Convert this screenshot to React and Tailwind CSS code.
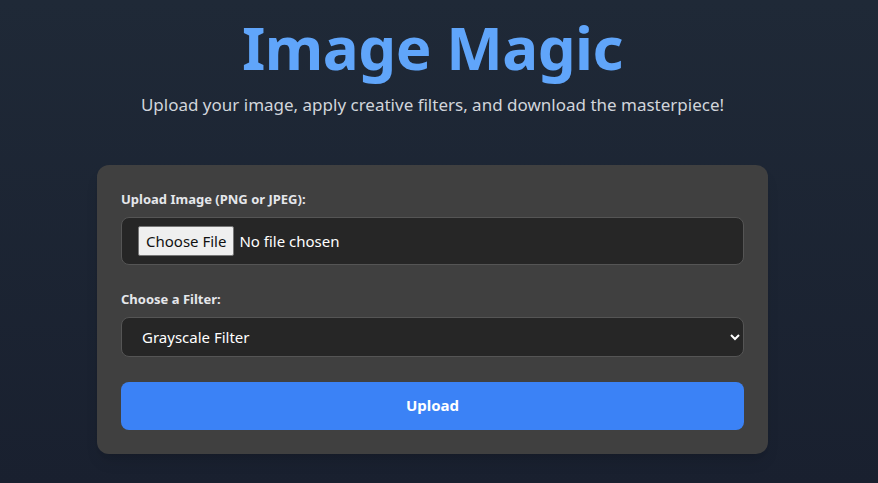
export default function App() {
  return (
    <div
      className="min-h-screen bg-gradient-to-b from-[#1f2937] to-[#19202f] pr-[13px] text-gray-200"
      style={{ fontFamily: '"Noto Sans", "Open Sans", sans-serif' }}
    >
      <div className="mx-auto flex max-w-[671px] flex-col items-center pt-[11px]">
        <h1 className="text-[60px] font-bold leading-[1.2] tracking-[-0.5px] text-[#60a5fa]">
          Image Magic
        </h1>
        <p className="mt-[9px] text-[17px] text-[#d1d5db]">
          Upload your image, apply creative filters, and download the masterpiece!
        </p>

        {/* form card */}
        <form className="mt-[47px] w-full rounded-xl bg-[#404040] p-6 shadow-lg">
          <label className="mb-2 block text-[13px] font-bold leading-5 text-[#e5e7eb]">
            Upload Image (PNG or JPEG):
          </label>
          <input
            type="file"
            accept="image/png, image/jpeg"
            className="block w-full rounded-lg border border-[#555555] bg-[#262626] px-4 py-2 text-[15px] leading-[22px] text-white file:mr-[5px] file:rounded-[2px] file:border file:border-solid file:border-[#767676] file:bg-[#efefef] file:px-[7px] file:py-[3px] file:text-[15px] file:text-[#111]"
          />

          <label className="mb-2 mt-6 block text-[13px] font-bold leading-5 text-[#e5e7eb]">
            Choose a Filter:
          </label>
          <select className="block h-10 w-full rounded-lg border border-[#555555] bg-[#262626] px-4 text-[15px] text-white">
            <option>Grayscale Filter</option>
            <option>Sepia Filter</option>
            <option>Invert Filter</option>
          </select>

          <button
            type="button"
            className="mt-[25px] h-12 w-full rounded-lg bg-[#3b82f6] text-[15px] font-bold text-white"
          >
            Upload
          </button>
        </form>
      </div>
    </div>
  );
}
